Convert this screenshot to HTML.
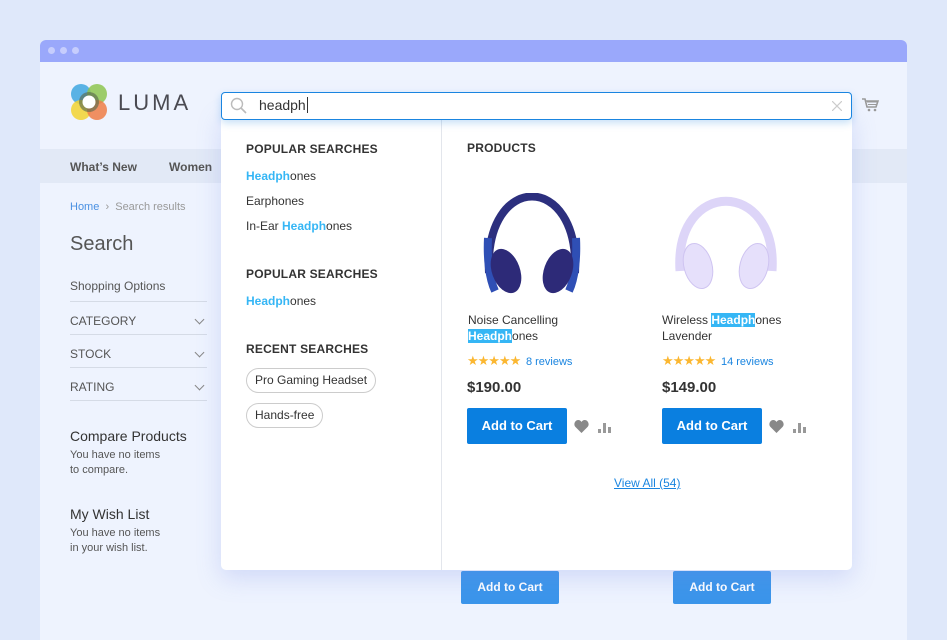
<!DOCTYPE html>
<html><head><meta charset="utf-8"><style>
*{box-sizing:border-box;margin:0;padding:0}
body{width:947px;height:636px;overflow:hidden;background:#dfe8fa;font-family:"Liberation Sans",sans-serif;position:relative;color:#333}
.a{position:absolute}
.win{left:40px;top:40px;width:867px;height:600px;background:#eef3fe;border-radius:6px 6px 0 0;overflow:hidden}
.bar{left:0;top:0;width:867px;height:22px;background:#9aa8fb}
.dot{width:7px;height:7px;border-radius:50%;background:#c6cdfd;top:7px}
.nav{left:0;top:109px;width:867px;height:34px;background:#e2e9f6}
.t{white-space:nowrap}
.hl{color:#35b6f5;font-weight:bold}
.hb{background:#35b6f5;color:#fff;font-weight:bold}
.btn{background:#0a7fe0;color:#fff;font-weight:bold;font-size:13px;text-align:center;border-radius:2px;width:100px;height:36px;line-height:36px}
.sect{font-weight:bold;font-size:12px;color:#333;letter-spacing:.2px}
.f{font-size:12px;color:#555;width:137px;border-bottom:1px solid #d5dbe6;height:33px;line-height:38px}
.chev{position:absolute;right:4px;top:14px;width:7px;height:7px;border-right:1px solid #888;border-bottom:1px solid #888;transform:rotate(45deg)}
</style></head><body>
<div class="a win">
 <div class="a bar"></div>
 <div class="a dot" style="left:8px"></div><div class="a dot" style="left:20px"></div><div class="a dot" style="left:32px"></div>
 <svg class="a" style="left:30px;top:43px" width="38" height="38" viewBox="0 0 38 38">
  <circle cx="11" cy="11" r="10" fill="#3ea6e0" opacity=".85"/><circle cx="27" cy="11" r="10" fill="#8dc450" opacity=".85"/>
  <circle cx="11" cy="27" r="10" fill="#f2d230" opacity=".85"/><circle cx="27" cy="27" r="10" fill="#ee7c46" opacity=".85"/>
  <circle cx="19" cy="19" r="10" fill="#5c6b4e" opacity=".65"/><circle cx="19" cy="19" r="6.5" fill="#fff"/>
 </svg>
 <div class="a t" style="left:78px;top:50px;font-size:22px;letter-spacing:3px;color:#4a4a52">LUMA</div>
 <svg class="a" style="left:821px;top:57px" width="18" height="16" viewBox="0 0 18 16"><path d="M1 2h3l2 8h9l2-6H5" fill="none" stroke="#999" stroke-width="1.6"/><path d="M6 5h10M7 7.5h9" stroke="#999"/><circle cx="8" cy="13" r="1.3" fill="#999"/><circle cx="14" cy="13" r="1.3" fill="#999"/></svg>
 <div class="a nav"></div>
 <div class="a t" style="left:30px;top:120px;font-size:12px;font-weight:bold;color:#555">What’s New</div>
 <div class="a t" style="left:129px;top:120px;font-size:12px;font-weight:bold;color:#555">Women</div>
 <div class="a t" style="left:30px;top:161px;font-size:11px;color:#999"><span style="color:#4a90e2">Home</span> &nbsp;›&nbsp; Search results</div>
 <div class="a t" style="left:30px;top:193px;font-size:20px;color:#555">Search</div>
 <div class="a t" style="left:30px;top:239px;font-size:12px;color:#555">Shopping Options</div>
 <div class="a" style="left:30px;top:261px;width:137px;border-top:1px solid #d5dbe6"></div>
 <div class="a f" style="left:30px;top:262px">CATEGORY<i class="chev"></i></div>
 <div class="a f" style="left:30px;top:295px">STOCK<i class="chev"></i></div>
 <div class="a f" style="left:30px;top:328px">RATING<i class="chev"></i></div>
 <div class="a t" style="left:30px;top:388px;font-size:14px;color:#333">Compare Products</div>
 <div class="a" style="left:30px;top:408px;font-size:11px;color:#555;line-height:15px">You have no items<br>to compare.</div>
 <div class="a t" style="left:30px;top:466px;font-size:14px;color:#333">My Wish List</div>
 <div class="a" style="left:30px;top:486px;font-size:11px;color:#555;line-height:15px">You have no items<br>in your wish list.</div>
 <div class="a btn" style="left:421px;top:531px;width:98px;height:33px;line-height:33px;background:#3b95ea;font-size:12px">Add to Cart</div>
 <div class="a btn" style="left:633px;top:531px;width:98px;height:33px;line-height:33px;background:#3b95ea;font-size:12px">Add to Cart</div>
</div>
<!-- dropdown -->
<div class="a" style="left:221px;top:112px;width:631px;height:458px;background:#fff;border-radius:0 0 5px 5px;box-shadow:0 8px 24px rgba(120,140,230,.25)"></div>
<div class="a" style="left:441px;top:120px;width:1px;height:450px;background:#e3e6ec"></div>
<div class="a" style="left:221px;top:92px;width:631px;height:28px;background:#fff;border:1px solid #1a85e0;border-radius:4px;box-shadow:0 3px 8px rgba(26,133,224,.25)"></div>
<svg class="a" style="left:230px;top:97px" width="18" height="18" viewBox="0 0 18 18"><circle cx="7" cy="7" r="5.5" fill="none" stroke="#bbb" stroke-width="1.4"/><path d="M11 11l5 5" stroke="#bbb" stroke-width="1.6"/></svg>
<div class="a t" style="left:259px;top:97px;font-size:14px;color:#333">headph<span style="border-left:1px solid #333;margin-left:1px"></span></div>
<svg class="a" style="left:832px;top:101px" width="10" height="10"><path d="M0 0L10 10M10 0L0 10" stroke="#ccc" stroke-width="1.2"/></svg>
<div class="a t sect" style="left:246px;top:142px">POPULAR SEARCHES</div>
<div class="a t" style="left:246px;top:169px;font-size:12px"><span class="hl">Headph</span>ones</div>
<div class="a t" style="left:246px;top:194px;font-size:12px">Earphones</div>
<div class="a t" style="left:246px;top:219px;font-size:12px">In-Ear <span class="hl">Headph</span>ones</div>
<div class="a t sect" style="left:246px;top:267px">POPULAR SEARCHES</div>
<div class="a t" style="left:246px;top:294px;font-size:12px"><span class="hl">Headph</span>ones</div>
<div class="a t sect" style="left:246px;top:342px">RECENT SEARCHES</div>
<div class="a t" style="left:246px;top:368px;height:25px;line-height:23px;padding:0 8px;border:1px solid #ccc;border-radius:13px;font-size:12px">Pro Gaming Headset</div>
<div class="a t" style="left:246px;top:403px;height:25px;line-height:23px;padding:0 8px;border:1px solid #ccc;border-radius:13px;font-size:12px">Hands-free</div>
<div class="a t sect" style="left:467px;top:141px">PRODUCTS</div>
<svg class="a" style="left:482px;top:193px" width="100" height="105" viewBox="0 0 100 105">
 <path d="M7 80 C2 -22 98 -22 93 80" fill="none" stroke="#2c2f7e" stroke-width="8"/>
 <path d="M6 45 C5 65 7 85 13 98" stroke="#2f4fb5" stroke-width="8" fill="none"/><path d="M94 45 C95 65 93 85 87 98" stroke="#2f4fb5" stroke-width="8" fill="none"/>
 <ellipse cx="24" cy="78" rx="14" ry="23" fill="#2d2a78" transform="rotate(-20 24 78)"/><ellipse cx="76" cy="78" rx="14" ry="23" fill="#2d2a78" transform="rotate(20 76 78)"/>
</svg>
<svg class="a" style="left:672px;top:196px" width="108" height="100" viewBox="0 0 108 100">
 <path d="M8 75 C2 -18 106 -18 100 75" fill="none" stroke="#ddd5f8" stroke-width="9"/>
 <ellipse cx="26" cy="70" rx="14" ry="23" fill="#e6e0fb" stroke="#cfc4f1" transform="rotate(-15 26 70)"/><ellipse cx="82" cy="70" rx="14" ry="23" fill="#e6e0fb" stroke="#cfc4f1" transform="rotate(15 82 70)"/>
</svg>
<div class="a" style="left:468px;top:312px;font-size:12px;line-height:16px;color:#333">Noise Cancelling<br><span class="hb">Headph</span>ones</div>
<div class="a" style="left:662px;top:312px;font-size:12px;line-height:16px;color:#333">Wireless <span class="hb">Headph</span>ones<br>Lavender</div>
<div class="a t" style="left:467px;top:353px;font-size:13px;color:#fbb731;letter-spacing:-1px">★★★★★ <span style="color:#1a85e0;font-size:11px;letter-spacing:0">&nbsp;8 reviews</span></div>
<div class="a t" style="left:662px;top:353px;font-size:13px;color:#fbb731;letter-spacing:-1px">★★★★★ <span style="color:#1a85e0;font-size:11px;letter-spacing:0">&nbsp;14 reviews</span></div>
<div class="a t" style="left:467px;top:379px;font-size:15px;font-weight:bold;color:#333">$190.00</div>
<div class="a t" style="left:662px;top:379px;font-size:15px;font-weight:bold;color:#333">$149.00</div>
<div class="a btn" style="left:467px;top:408px">Add to Cart</div>
<div class="a btn" style="left:662px;top:408px">Add to Cart</div>
<svg class="a" style="left:574px;top:420px" width="15" height="13" viewBox="0 0 15 13"><path d="M7.5 13L1.5 7C-1 4.5 1 0 4.2 0 5.8 0 7 1 7.5 2 8 1 9.2 0 10.8 0 14 0 16 4.5 13.5 7z" fill="#888"/></svg>
<svg class="a" style="left:769px;top:420px" width="15" height="13" viewBox="0 0 15 13"><path d="M7.5 13L1.5 7C-1 4.5 1 0 4.2 0 5.8 0 7 1 7.5 2 8 1 9.2 0 10.8 0 14 0 16 4.5 13.5 7z" fill="#888"/></svg>
<svg class="a" style="left:598px;top:421px" width="14" height="12"><rect x="0" y="8" width="3" height="4" fill="#999"/><rect x="5" y="2" width="3" height="10" fill="#999"/><rect x="10" y="6" width="3" height="6" fill="#999"/></svg>
<svg class="a" style="left:793px;top:421px" width="14" height="12"><rect x="0" y="8" width="3" height="4" fill="#999"/><rect x="5" y="2" width="3" height="10" fill="#999"/><rect x="10" y="6" width="3" height="6" fill="#999"/></svg>
<div class="a t" style="left:614px;top:476px;font-size:12px;color:#1a85e0;text-decoration:underline">View All (54)</div>
</body></html>
